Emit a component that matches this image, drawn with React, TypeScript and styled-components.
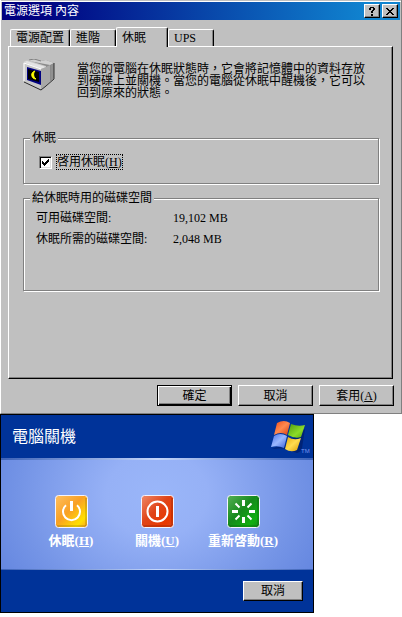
import React, { useState } from "react";
import styled, { createGlobalStyle, css } from "styled-components";

const GlobalStyle = createGlobalStyle`
  *, *::before, *::after { box-sizing: border-box; }
  body {
    margin: 0;
    background: #fff;
    color: #000;
    font: 12px/12px "Liberation Serif", "Noto Sans CJK TC", serif;
  }
  button, input { font: inherit; color: inherit; margin: 0; }
`;

const raised = css`
  border: 1px solid;
  border-color: #fff #000 #000 #fff;
  box-shadow: inset -1px -1px 0 #808080;
  background: #c0c0c0;
`;

/* ---------- classic properties window ---------- */

const PropertiesWindow = styled.section`
  background: #c0c0c0;
  border-left: 1px solid #fff;
  border-right: 1px solid #808080;
  border-bottom: 1px solid #808080;
  box-shadow: inset 0 1px 0 #c0c0c0, inset 0 2px 0 #fff;
  padding: 2px 1px 7px;
`;

const TitleBar = styled.header`
  display: flex;
  align-items: center;
  height: 18px;
  padding: 0 2px;
  color: #fff;
  background: linear-gradient(90deg, #000080 8%, #0844a8 50%, #1084d0 92%);
`;

const TitleText = styled.h1`
  flex: 1;
  margin: 0;
  font-size: 12px;
  font-weight: 400;
`;

const CaptionButtons = styled.div`
  display: flex;
  gap: 2px;
`;

const CaptionButton = styled.button`
  ${raised}
  display: grid;
  place-items: center;
  width: 16px;
  height: 14px;
  padding: 0;
`;

const TabList = styled.div`
  display: flex;
  align-items: flex-end;
  margin-top: 7px;
  padding-left: 8px;
`;

const Tab = styled.button<{ $active: boolean }>`
  min-width: ${(p) => (p.$active ? 52 : 46)}px;
  height: ${(p) => (p.$active ? 20 : 17)}px;
  margin-bottom: ${(p) => (p.$active ? -1 : 0)}px;
  padding: 0 5px;
  text-align: left;
  line-height: 16px;
  background: #c0c0c0;
  border: 0 solid;
  border-width: 1px 1px 0 1px;
  border-color: #fff #000 #fff #fff;
  border-radius: 2px 2px 0 0;
  box-shadow: inset -1px 0 0 #808080;
  white-space: nowrap;
`;

const TabPage = styled.div`
  margin: 0 7px 0 6px;
  padding: 12px 13px 87px 14px;
  border: 1px solid;
  border-color: #fff #000 #000 #fff;
  box-shadow: inset -1px -1px 0 #808080;
`;

const Intro = styled.div`
  display: flex;
  gap: 22px;
  min-height: 73px;
`;

const IntroText = styled.p`
  margin: 4px 0 0;
  max-width: 290px;
`;

const Group = styled.fieldset`
  margin: 0;
  min-width: 0;
  padding: 0 12px;
  border: 1px solid #808080;
  box-shadow: 1px 1px 0 #fff, inset 1px 1px 0 #fff;

  & + & { margin-top: 8px; }
`;

const Legend = styled.legend`
  margin-left: -6px;
  padding: 0 2px;
  background: #c0c0c0;
`;

const CheckRow = styled.label`
  display: inline-flex;
  align-items: center;
  gap: 4px;
  margin: 10px 0 13px 3px;
`;

const CheckCell = styled.span`
  display: grid;
  width: 13px;
  height: 13px;

  & > * { grid-area: 1 / 1; }
  svg { place-self: center; pointer-events: none; }
`;

const CheckInput = styled.input`
  appearance: none;
  width: 13px;
  height: 13px;
  background: #fff;
  border: 1px solid;
  border-color: #808080 #fff #fff #808080;
  box-shadow: inset 1px 1px 0 #000, inset -1px -1px 0 #dfdfdf;
  & + svg { visibility: hidden; }
  &:checked + svg { visibility: visible; }
`;

const CheckText = styled.span`
  border: 1px dotted #000;
  line-height: 14px;
`;

const SpaceList = styled.dl`
  display: grid;
  grid-template-columns: 137px 1fr;
  row-gap: 9px;
  margin: 8px 0 45px;

  dt, dd { margin: 0; white-space: nowrap; }
`;

const ButtonRow = styled.footer`
  display: flex;
  justify-content: flex-end;
  gap: 6px;
  margin-top: 6px;
  padding-right: 6px;
`;

const PushButton = styled.button<{ $default?: boolean; $narrow?: boolean }>`
  ${raised}
  width: ${(p) => (p.$narrow ? 60 : 75)}px;
  height: ${(p) => (p.$narrow ? 20 : 21)}px;
  padding: 0;
  line-height: 16px;
  ${(p) =>
    p.$default &&
    css`
      border-color: #000;
      box-shadow: inset 1px 1px 0 #fff, inset -1px -1px 0 #000, inset -2px -2px 0 #808080;
    `}
`;

/* ---------- turn off computer dialog ---------- */

const ShutdownDialog = styled.section`
  max-width: 314px;
  color: #fff;
  background: #003399;
  border: 1px solid #000;
`;

const ShutdownHeader = styled.header`
  display: flex;
  align-items: center;
  justify-content: space-between;
  height: 43px;
  padding: 0 3px 0 11px;
`;

const ShutdownTitle = styled.h2`
  margin: 0;
  font-size: 16px;
  line-height: 20px;
  font-weight: 400;
`;

const Choices = styled.div`
  display: grid;
  grid-template-columns: repeat(3, 86px);
  justify-content: center;
  padding: 35px 0 20px;
  border-top: 2px solid #9db8ee;
  border-bottom: 1px solid #1b48ad;
  border-image: linear-gradient(90deg, #3c62b8, #c4d6fa 50%, #3c62b8) 2 0 1 0;
  background: radial-gradient(ellipse 230px 190px at 50% 32%, #9ab6f9 0%, #96b1f6 22%, #7494e6 60%, #5c7fdc 90%);
`;

const Choice = styled.button`
  display: flex;
  flex-direction: column;
  align-items: center;
  gap: 5px;
  padding: 0;
  border: 0;
  background: none;
  color: #fff;
  font-size: 13px;
  line-height: 16px;
  font-weight: 700;
  white-space: nowrap;
`;

const ShutdownFooter = styled.footer`
  display: flex;
  justify-content: flex-end;
  padding: 11px 10px 11px;
  color: #000;
`;

/* ---------- drawings ---------- */

const HelpGlyph = () => (
  <svg width="8" height="9" viewBox="0 0 8 9" shapeRendering="crispEdges" aria-hidden="true">
    <path d="M2 0h4v1H2zM1 1h2v2H1zM5 1h2v2H5zM4 3h2v1H4zM3 4h2v2H3zM3 7h2v2H3z" />
  </svg>
);

const CloseGlyph = () => (
  <svg width="8" height="7" viewBox="0 0 8 7" shapeRendering="crispEdges" aria-hidden="true">
    <path d="M0 0h2v1H0zM6 0h2v1H6zM1 1h2v1H1zM5 1h2v1H5zM2 2h4v1H2zM3 3h2v1H3zM2 4h4v1H2zM1 5h2v1H1zM5 5h2v1H5zM0 6h2v1H0zM6 6h2v1H6z" />
  </svg>
);

const CheckGlyph = () => (
  <svg width="7" height="7" viewBox="0 0 7 7" shapeRendering="crispEdges" aria-hidden="true">
    <path d="M0 2h1v3H0zM1 3h1v3H1zM2 4h1v3H2zM3 3h1v3H3zM4 2h1v3H4zM5 1h1v3H5zM6 0h1v3H6z" />
  </svg>
);

const MonitorIcon = () => (
  <svg width="32" height="32" viewBox="0 0 32 32" aria-hidden="true">
    <path d="M6 1l5-1 7 2 5-1 8 3v15l-8 7-6 2V6z" fill="#8a8a8a" />
    <path d="M6 1l5-1 7 2 5-1 8 3-4 2-21-4z" fill="#d0d0d0" />
    <path d="M6 1l5-1 7 2" fill="none" stroke="#808080" />
    <path d="M23 8l4-2v17l-4 3z" fill="#a8a8a8" />
    <path d="M28 6l2-1v15l-2 2z" fill="#909090" />
    <path d="M31 4v16l-8 7" fill="none" stroke="#303030" />
    <path d="M0 3l4-2 19 6v20l-5 4L1 24 0 22z" fill="#c8c8c8" />
    <path d="M1 3l3-1 19 6-5 2z" fill="#e4e4e4" />
    <path d="M1 22V4l17 6" fill="none" stroke="#fff" />
    <path d="M18 10l5-2v19l-5 4z" fill="#a8a8a8" />
    <path d="M1 23l17 8 5-4" fill="none" stroke="#282828" />
    <path d="M4 8l14 4v14L4 21z" fill="#000080" />
    <path d="M5 10l11 3v10L5 20z" fill="#000" />
    <path d="M12 12c-5 1-4 8 1 8-3-2-3-6-1-8z" fill="#ff0" stroke="#ff0" />
  </svg>
);

const WindowsFlag = () => (
  <svg width="40" height="34" viewBox="0 0 40 34" aria-hidden="true">
    <defs>
      <linearGradient id="flagRed" x2="1" y2="1">
        <stop offset="0" stopColor="#f04a18" />
        <stop offset=".5" stopColor="#ff8a50" />
        <stop offset="1" stopColor="#d83a0c" />
      </linearGradient>
      <linearGradient id="flagGreen" x2="1" y2="1">
        <stop offset="0" stopColor="#4e9a10" />
        <stop offset=".6" stopColor="#8cdc28" />
        <stop offset="1" stopColor="#58a80c" />
      </linearGradient>
      <linearGradient id="flagBlue" x2="1" y2="1">
        <stop offset="0" stopColor="#4a70e8" />
        <stop offset=".5" stopColor="#9ab8ff" />
        <stop offset="1" stopColor="#3c60d8" />
      </linearGradient>
      <linearGradient id="flagYellow" x2="1" y2="1">
        <stop offset="0" stopColor="#e8a808" />
        <stop offset=".5" stopColor="#ffdc50" />
        <stop offset="1" stopColor="#d89800" />
      </linearGradient>
    </defs>
    <path d="M2 29q7-4 13 0l12 4q4-1 5-5l3-19-4 2-18 17z" fill="#001c68" opacity=".7" />
    <path d="M7 3q7-4 13 0l-3 12q-6-4-13 0z" fill="url(#flagRed)" />
    <path d="M21 4q7 3 14 1l-4 12q-6 2-13-2z" fill="url(#flagGreen)" />
    <path d="M4 16q6-4 13 0l-3 12q-6-3-13-1z" fill="url(#flagBlue)" />
    <path d="M18 17q6 4 13 1l-4 12q-6 3-12-1z" fill="url(#flagYellow)" />
    <text x="31" y="33" fontSize="6" fontFamily="Liberation Sans, sans-serif" fill="#7896f0">TM</text>
  </svg>
);

type ChoiceKind = "hibernate" | "off" | "restart";

const faces: Record<ChoiceKind, [string, string, string]> = {
  hibernate: ["#ffc060", "#f9a024", "#ffe000"],
  off: ["#f08868", "#e04418", "#e83800"],
  restart: ["#58b058", "#168a1c", "#10b010"],
};

const ChoiceIcon = ({ kind }: { kind: ChoiceKind }) => {
  const [light, base, glow] = faces[kind];
  return (
    <svg width="33" height="33" viewBox="0 0 33 33" aria-hidden="true">
      <defs>
        <linearGradient id={`face-${kind}`} x2="1" y2="1">
          <stop offset="0" stopColor={light} />
          <stop offset=".45" stopColor={base} />
          <stop offset=".8" stopColor={glow} />
          <stop offset="1" stopColor={base} />
        </linearGradient>
      </defs>
      <rect x="0.5" y="0.5" width="32" height="32" rx="3" fill={`url(#face-${kind})`} stroke="#f4f4ff" />
      <path d="M2 31h28q1 0 1-1V3" fill="none" stroke="#000" strokeOpacity=".25" />
      {kind === "hibernate" && (
        <g fill="none" stroke="#fff">
          <path d="M11 10.2a8.5 8.5 0 1 0 11 0" strokeWidth="2" />
          <path d="M16.5 6v10" strokeWidth="3" />
        </g>
      )}
      {kind === "off" && (
        <g fill="none" stroke="#fff">
          <circle cx="16.5" cy="16.5" r="10" strokeWidth="2" />
          <path d="M16.5 11v11" strokeWidth="3" />
        </g>
      )}
      {kind === "restart" && (
        <g fill="none" stroke="#fff">
          <path d="M16.5 5v6M16.5 22v6M5 16.5h6M22 16.5h6" strokeWidth="3" />
          <path d="M8.5 8.5l4 4M24.5 8.5l-4 4M8.5 24.5l4-4M24.5 24.5l-4-4" strokeWidth="2" />
        </g>
      )}
    </svg>
  );
};

/* ---------- page ---------- */

const tabs = ["電源配置", "進階", "休眠", "UPS"];

const choices: { kind: ChoiceKind; label: string; hotkey: string }[] = [
  { kind: "hibernate", label: "休眠", hotkey: "H" },
  { kind: "off", label: "關機", hotkey: "U" },
  { kind: "restart", label: "重新啓動", hotkey: "R" },
];

export default function App() {
  const [tab, setTab] = useState(2);
  const [enabled, setEnabled] = useState(true);

  return (
    <main lang="zh-Hant">
      <GlobalStyle />
      <PropertiesWindow>
        <TitleBar>
          <TitleText>電源選項 內容</TitleText>
          <CaptionButtons>
            <CaptionButton aria-label="說明"><HelpGlyph /></CaptionButton>
            <CaptionButton aria-label="關閉"><CloseGlyph /></CaptionButton>
          </CaptionButtons>
        </TitleBar>
        <TabList role="tablist">
          {tabs.map((name, i) => (
            <Tab key={name} role="tab" aria-selected={i === tab} $active={i === tab} onClick={() => setTab(i)}>
              {name}
            </Tab>
          ))}
        </TabList>
        <TabPage role="tabpanel">
          <Intro>
            <MonitorIcon />
            <IntroText>
              當您的電腦在休眠狀態時，它會將記憶體中的資料存放到硬碟上並關機。當您的電腦從休眠中醒機後，它可以回到原來的狀態。
            </IntroText>
          </Intro>
          <Group>
            <Legend>休眠</Legend>
            <CheckRow>
              <CheckCell>
                <CheckInput type="checkbox" checked={enabled} onChange={(e) => setEnabled(e.target.checked)} />
                <CheckGlyph />
              </CheckCell>
              <CheckText>啓用休眠(<u>H</u>)</CheckText>
            </CheckRow>
          </Group>
          <Group>
            <Legend>給休眠時用的磁碟空間</Legend>
            <SpaceList>
              <dt>可用磁碟空間:</dt>
              <dd>19,102 MB</dd>
              <dt>休眠所需的磁碟空間:</dt>
              <dd>2,048 MB</dd>
            </SpaceList>
          </Group>
        </TabPage>
        <ButtonRow>
          <PushButton $default>確定</PushButton>
          <PushButton>取消</PushButton>
          <PushButton>套用(<u>A</u>)</PushButton>
        </ButtonRow>
      </PropertiesWindow>
      <ShutdownDialog>
        <ShutdownHeader>
          <ShutdownTitle>電腦關機</ShutdownTitle>
          <WindowsFlag />
        </ShutdownHeader>
        <Choices>
          {choices.map((c) => (
            <Choice key={c.kind}>
              <ChoiceIcon kind={c.kind} />
              <span>{c.label}(<u>{c.hotkey}</u>)</span>
            </Choice>
          ))}
        </Choices>
        <ShutdownFooter>
          <PushButton $narrow>取消</PushButton>
        </ShutdownFooter>
      </ShutdownDialog>
    </main>
  );
}
